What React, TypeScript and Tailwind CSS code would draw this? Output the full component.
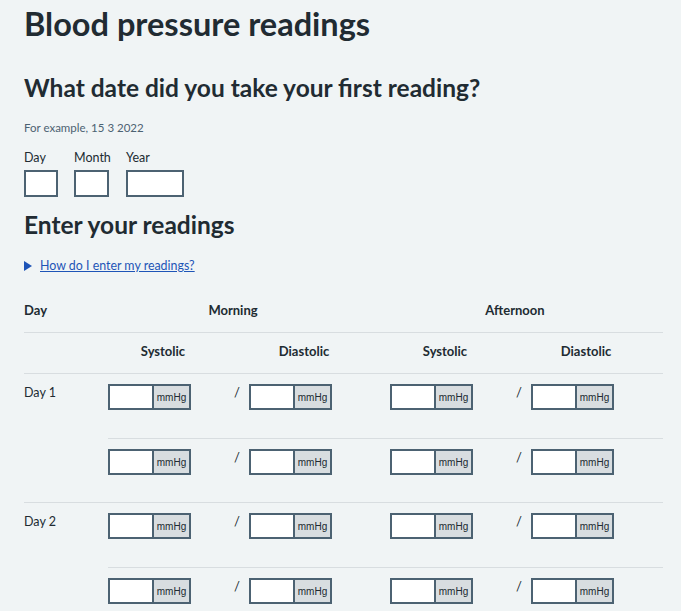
import React from 'react';

const font = { fontFamily: 'Lato, "Noto Sans", sans-serif' };

const UnitInput = () => (
  <div className="flex h-[26px] w-[83px] border-2 border-[#4c6272] bg-white">
    <div className="flex-1 bg-white" />
    <div className="flex w-[37px] items-center justify-center border-l-2 border-[#4c6272] bg-[#d8dde0] font-['Liberation_Sans',Arial,sans-serif] text-[10px] text-[#212b32]">
      mmHg
    </div>
  </div>
);

const Slash = () => <span className="ml-[43px] text-[13px] leading-[16px]">/</span>;

const SubRow = ({ first }: { first: boolean }) => (
  <div className={`flex h-[64px] pt-[10px] ${first ? '' : 'border-t border-[#d8dde0]'}`}>
    <div className="flex w-[141px] items-start">
      <UnitInput />
      <Slash />
    </div>
    <div className="w-[141px]">
      <UnitInput />
    </div>
    <div className="flex w-[141px] items-start">
      <UnitInput />
      <Slash />
    </div>
    <div className="w-[132px]">
      <UnitInput />
    </div>
  </div>
);

const DayRow = ({ label }: { label: string }) => (
  <div className="flex border-b border-[#d8dde0]">
    <div className="w-[84px] pt-[9px] text-[12.5px] leading-[20px]">{label}</div>
    <div className="flex-1">
      <SubRow first />
      <SubRow first={false} />
    </div>
  </div>
);

const DateField = ({ label, width, col }: { label: string; width: string; col: string }) => (
  <div className={`flex flex-col ${col}`}>
    <label className="text-[12.5px] leading-[20px]">{label}</label>
    <div className={`mt-[2px] h-[27px] border-2 border-[#4c6272] bg-white ${width}`} />
  </div>
);

export default function App() {
  return (
    <div className="min-h-screen bg-[#f0f4f5] px-6 pt-[5px] text-[#212b32]" style={font}>
      <h1 className="text-[32.5px] font-bold leading-[38px]">Blood pressure readings</h1>

      <h2 className="mt-[30px] text-[24.5px] font-bold leading-[30px]">
        What date did you take your first reading?
      </h2>
      <p className="mt-[15px] text-[11.5px] leading-[20px] text-[#4c6272]">For example, 15 3 2022</p>

      <div className="mt-[10px] flex">
        <DateField label="Day" width="w-[34px]" col="w-[50px]" />
        <DateField label="Month" width="w-[35px]" col="w-[52px]" />
        <DateField label="Year" width="w-[58px]" col="w-[58px]" />
      </div>

      <h2 className="mt-[13px] text-[24.5px] font-bold leading-[30px]">Enter your readings</h2>

      <div className="mt-[16px] flex items-center text-[12.4px] leading-[20px]">
        <svg width="8" height="10" viewBox="0 0 8 10" className="mr-[8px]">
          <polygon points="0,0 8,5 0,10" fill="#1e54b7" />
        </svg>
        <a href="#" className="text-[#1e54b7] underline">
          How do I enter my readings?
        </a>
      </div>

      <div className="mt-[17px] w-[639px] text-[13px]">
        <div className="flex border-b border-[#d8dde0] pb-[12px] pt-[7px] font-bold leading-[20px]">
          <div className="w-[84px]">Day</div>
          <div className="w-[282px]">
            <div className="w-[250px] text-center">Morning</div>
          </div>
          <div className="w-[250px] text-center">Afternoon</div>
        </div>
        <div className="flex border-b border-[#d8dde0] pb-[12px] pt-[8px] font-bold leading-[20px]">
          <div className="w-[84px]" />
          <div className="w-[141px]">
            <div className="w-[110px] text-center">Systolic</div>
          </div>
          <div className="w-[141px]">
            <div className="w-[110px] text-center">Diastolic</div>
          </div>
          <div className="w-[141px]">
            <div className="w-[110px] text-center">Systolic</div>
          </div>
          <div className="w-[110px] text-center">Diastolic</div>
        </div>
        <DayRow label="Day 1" />
        <DayRow label="Day 2" />
      </div>
    </div>
  );
}
